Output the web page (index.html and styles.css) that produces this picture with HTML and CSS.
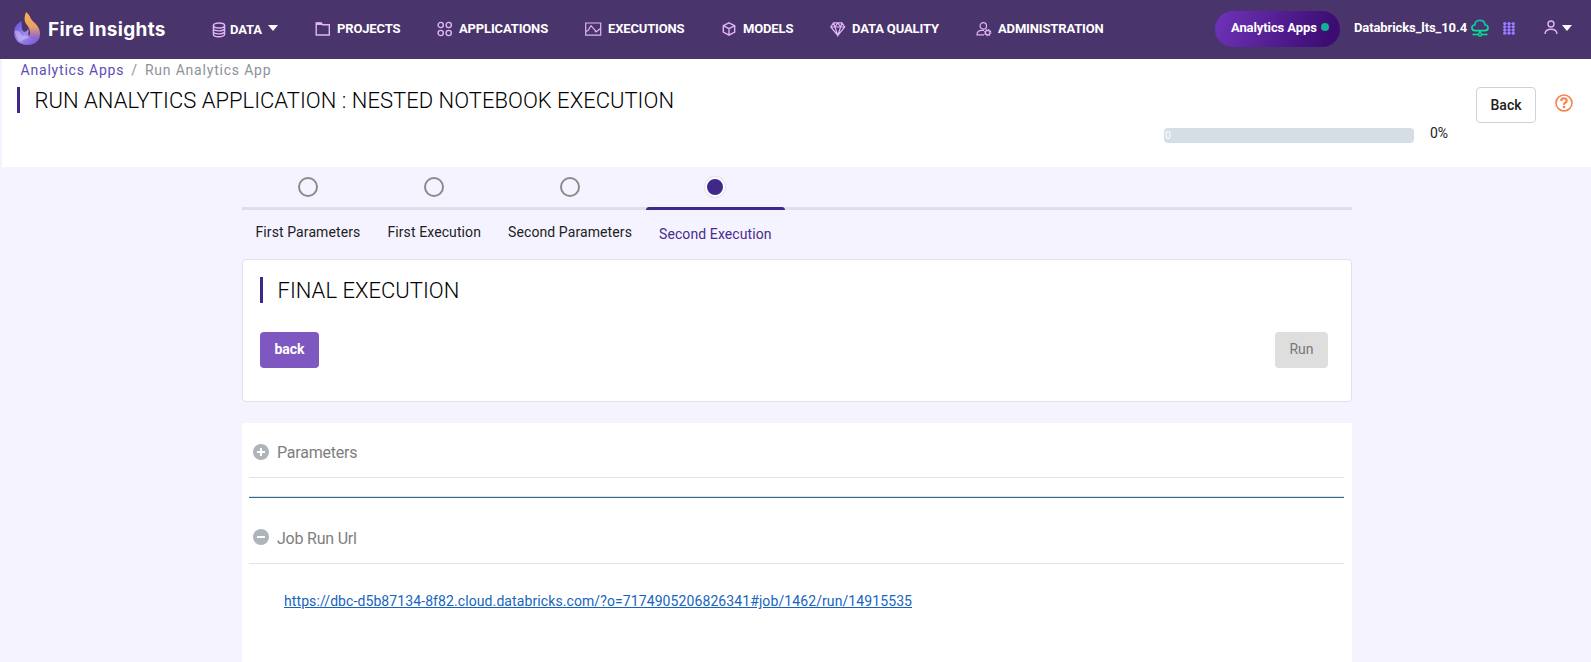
FILE: index.html
```html
<!DOCTYPE html>
<html lang="en">
<head>
<meta charset="utf-8">
<title>Fire Insights</title>
<link rel="stylesheet" href="styles.css">
</head>
<body>
<header class="topbar">
  <a class="brand">
    <svg class="brand-logo" width="28" height="35" viewBox="0 0 28 35">
      <defs>
        <linearGradient id="flame" x1="0" y1="0" x2="0" y2="1"><stop offset="0" stop-color="#ffb547"/><stop offset=".45" stop-color="#e5a268"/><stop offset=".8" stop-color="#8a62d8"/><stop offset="1" stop-color="#6a45cf"/></linearGradient>
        <linearGradient id="swirl" x1="0" y1="0" x2="1" y2="1"><stop offset="0" stop-color="#5b46dc"/><stop offset=".5" stop-color="#a08be8"/><stop offset="1" stop-color="#6c4dd4"/></linearGradient>
      </defs>
      <path d="M13 1C16 3 17 6 18 8C21 12 27 15 27 22.500C27 29 22 34 15 34C13 34 11 30 14 27C19 24 17 18 14 14C10 9 12 5 13 1Z" fill="url(#flame)"/>
      <path d="M8.500 10C3 13 1 17 1 22C1 29 7 34 14 34C20 34 25 31 27 26C23 29 18 27 16 25C14 22 17 21 15 18C14 20 12 22 10 20C8 17 9 14 8.500 10Z" fill="url(#swirl)"/>
      <path d="M2 20C6 19 8 22 9 25C12 24 15 25 16 26C14 28 10 28 8 31C5 29 2 24 2 20Z" fill="#c4b5f5" opacity=".65"/>
    </svg>
    <span class="brand-name">Fire Insights</span>
  </a>
  <nav class="nav">
    <a class="nav-item nav-data"><svg width="14" height="16" viewBox="0 0 14 16"><g class="line"><ellipse cx="7" cy="3.500" rx="5.600" ry="2.500"/><path d="M1.400 3.500V12.200C1.400 15.600 12.600 15.600 12.600 12.200V3.500M1.400 6.500C1.400 9.600 12.600 9.600 12.600 6.500M1.400 9.500C1.400 12.600 12.600 12.600 12.600 9.500"/></g></svg><span>DATA</span><i class="caret"></i></a>
    <a class="nav-item"><svg width="16" height="16" viewBox="0 0 16 16"><path class="line" d="M1.200 14V2H6.200L7.500 3.700H14.300V14Z"/><path d="M1 1.500H6.500L8 4H1Z" fill="#e0b4f6"/></svg><span>PROJECTS</span></a>
    <a class="nav-item"><svg width="16" height="16" viewBox="0 0 16 16"><g class="line"><circle cx="3.700" cy="4" r="2.600"/><circle cx="11.700" cy="4" r="2.600"/><circle cx="3.700" cy="12" r="2.600"/><circle cx="11.700" cy="12" r="2.600"/></g></svg><span>APPLICATIONS</span></a>
    <a class="nav-item"><svg width="17" height="16" viewBox="0 0 17 16"><path class="line thin" d="M.7 2H15.700V14.200H.7ZM1 10.500L3 9.500L6 4.700L11.300 10.700L15.500 7.500M9.800 10.700H12"/></svg><span>EXECUTIONS</span></a>
    <a class="nav-item"><svg width="15" height="16" viewBox="0 0 15 16"><path class="line" d="M7 1.800L12.700 4.700V11L7 14.200L1.300 11V4.700ZM1.300 4.700L7 7.700L12.700 4.700M7 7.700V14.200"/></svg><span>MODELS</span></a>
    <a class="nav-item"><svg width="16" height="16" viewBox="0 0 16 16"><path class="line thin" d="M3.500 1.900H12L14.700 6L7.800 14.500L.8 6ZM.8 6H14.700M3.500 1.900L5 6L7.800 14.500L10.600 6L12 1.900M5 6L7.800 2L10.600 6"/></svg><span>DATA QUALITY</span></a>
    <a class="nav-item"><svg width="16" height="16" viewBox="0 0 16 16"><g class="line thin"><circle cx="7.300" cy="4.900" r="3.200"/><path d="M8 13.900H1C.8 11 3 9.400 5.500 9.400H8"/><circle cx="11.700" cy="11.600" r="2.300"/><circle cx="11.700" cy="11.600" r="3.100" stroke-dasharray="1.200 1.230"/></g></svg><span>ADMINISTRATION</span></a>
  </nav>
  <div class="tools">
    <a class="pill">Analytics Apps<i class="dot"></i></a>
    <span class="cluster">Databricks_lts_10.4</span>
    <svg class="cloud" width="18" height="18" viewBox="0 0 18 18"><defs><linearGradient id="cg" x1="0" y1="0" x2="0" y2="1"><stop offset="0" stop-color="#0ebaa8"/><stop offset="1" stop-color="#00ee91"/></linearGradient></defs><path d="M4.200 11.700C-.1 11.500-.1 6.200 3.800 6C4-.2 13.500-.3 14.100 6C18.100 6.200 18 11.500 13.700 11.700ZM9 12V14" fill="none" stroke="url(#cg)" stroke-width="1.700"/><path d="M1.500 15.500H7.200M10.800 15.500H16.500" stroke="#00eb8f" stroke-width="1.500"/><circle cx="9" cy="15.500" r="1.600" fill="none" stroke="#00eb8f" stroke-width="1.300"/></svg>
    <svg class="grid-icon" width="12" height="13" viewBox="0 0 12 13"><g stroke="#7755d2" stroke-width=".9"><path d="M1.700 1V12M6 1V12M10.300 1V12M1 1.600H11M1 4.800H11M1 8H11M1 11.200H11"/></g><g fill="#987cff"><circle cx="1.700" cy="1.600" r="1.600"/><circle cx="6" cy="1.600" r="1.600"/><circle cx="10.300" cy="1.600" r="1.600"/><circle cx="1.700" cy="4.800" r="1.600"/><circle cx="6" cy="4.800" r="1.600"/><circle cx="10.300" cy="4.800" r="1.600"/><circle cx="1.700" cy="8" r="1.600"/><circle cx="6" cy="8" r="1.600"/><circle cx="10.300" cy="8" r="1.600"/><circle cx="1.700" cy="11.200" r="1.600"/><circle cx="6" cy="11.200" r="1.600"/><circle cx="10.300" cy="11.200" r="1.600"/></g></svg>
    <svg class="user" width="14" height="15" viewBox="0 0 14 15"><g class="line"><circle cx="7" cy="4" r="3"/><path d="M1 14C1.500 7.700 12.500 7.700 13 14"/></g></svg>
    <i class="caret"></i>
  </div>
</header>

<section class="page-head">
  <div class="head-left">
    <div class="crumbs"><a>Analytics Apps</a><span class="sep">/</span><span>Run Analytics App</span></div>
    <h1 class="title">RUN ANALYTICS APPLICATION : NESTED NOTEBOOK EXECUTION</h1>
  </div>
  <div class="progress"><span>0</span></div>
  <div class="percent">0%</div>
  <button class="btn btn-outline">Back</button>
  <svg class="help" width="18" height="18" viewBox="0 0 18 18"><circle cx="9" cy="9" r="8" fill="none" stroke="#f5834a" stroke-width="1.600"/><path d="M6.200 6.900C6.300 3.300 11.800 3.500 11.700 6.700C11.700 8.500 9 8.700 9 10.800" fill="none" stroke="#f5834a" stroke-width="2.200"/><circle cx="9" cy="13" r="1.300" fill="#f5834a"/></svg>
</section>

<main class="content">
  <ol class="steps">
    <li class="step"><i class="mark"></i><span>First Parameters</span></li>
    <li class="step"><i class="mark"></i><span>First Execution</span></li>
    <li class="step"><i class="mark"></i><span>Second Parameters</span></li>
    <li class="step active"><i class="mark"></i><span>Second Execution</span></li>
    <li class="rest"></li>
  </ol>
  <section class="card">
    <h2 class="title">FINAL EXECUTION</h2>
    <div class="actions"><button class="btn btn-primary">back</button><button class="btn btn-muted">Run</button></div>
  </section>
  <section class="results">
    <div class="fold"><svg width="16" height="16" viewBox="0 0 16 16"><circle cx="8" cy="8" r="8" fill="#adb5ba"/><path d="M4 8H12M8 4V12" stroke="#fff" stroke-width="2"/></svg><span>Parameters</span></div>
    <div class="divider"></div>
    <div class="fold fold-url"><svg width="16" height="16" viewBox="0 0 16 16"><circle cx="8" cy="8" r="8" fill="#adb5ba"/><path d="M4 8H12" stroke="#fff" stroke-width="2"/></svg><span>Job Run Url</span></div>
    <a class="url">https://dbc-d5b87134-8f82.cloud.databricks.com/?o=7174905206826341#job/1462/run/14915535</a>
  </section>
</main>
</body>
</html>
```
FILE: styles.css
```css
* { box-sizing: border-box; }
body { margin: 0; height: 662px; overflow: hidden; display: flex; flex-direction: column; background: #f5f3ff; color: #212121; font: 14px/20px Roboto, sans-serif; }
svg { display: block; flex: none; }
.line { fill: none; stroke: #e0b4f6; stroke-width: 1.4; }
.thin { stroke-width: 1.2; }
.caret { border: 5px solid transparent; border-top: 6px solid #fff; border-bottom: 0; }

.topbar { height: 59px; flex: none; display: flex; align-items: flex-start; background: #4a346c; color: #fff; }
.brand { display: flex; width: 212px; padding: 11px 0 0 13px; }
.brand-name { margin: 5px 0 0 7px; font: 700 19px/28px Inter, sans-serif; letter-spacing: .32px; white-space: nowrap; }
.nav { display: grid; grid-template-columns: 103px 122px 148px 137px 108px 146px 150px; padding-top: 18px; }
.nav-item { display: flex; align-items: center; height: 21px; gap: 6px; font-weight: 700; font-size: 13px; letter-spacing: -.15px; white-space: nowrap; }
.nav-data { gap: 4px; padding-top: 3px; }
.nav-data .caret { margin: -5px 0 0 2px; }
.tools { display: flex; align-items: flex-start; margin-left: auto; padding: 11px 19px 0 0; font-weight: 700; font-size: 13px; white-space: nowrap; }
.pill { display: flex; width: 125px; height: 36px; padding: 7px 0 0 16px; border-radius: 18px; background: linear-gradient(110deg, #6d31b5 5%, #3c0c72 90%); letter-spacing: -.1px; }
.dot { width: 8px; height: 8px; margin: 5px 0 0 4px; border-radius: 50%; background: #14b195; }
.cluster { width: 117px; margin: 7px 0 0 14px; letter-spacing: -.1px; }
.cloud { margin: 8px 0 0 0; }
.grid-icon { margin: 11px 0 0 14px; }
.user { margin: 9px 0 0 29px; }
.tools > .caret { margin: 14px 0 0 4px; }

.page-head { display: flex; flex: none; height: 108px; margin-left: 2px; background: #fff; }
.head-left { width: 1162px; padding-left: 15px; }
.crumbs { display: flex; gap: 7px; padding: 1px 0 0 3.500px; letter-spacing: .8px; color: #8d9299; }
.crumbs a { color: #5e4db2; }
.title { margin: 0; border-left: 3px solid #3f2887; padding: 1px 0 0 14.500px; height: 26px; font-weight: 300; font-size: 22px; line-height: 26px; color: #000; letter-spacing: .02px; white-space: nowrap; }
.crumbs + .title { margin-top: 7px; }
.progress { width: 250px; height: 15px; margin-top: 69px; border-radius: 4px; background: #d6dee5; color: #fff; font-size: 10.500px; line-height: 15px; padding-left: 1px; }
.percent { width: 46px; margin: 64px 0 0 16px; }
.btn { height: 36px; padding: 0; border: 0; border-radius: 4px; font: 500 14px/20px Roboto, sans-serif; }
.btn-outline { width: 60px; margin-top: 28px; border: 1px solid #cfd2da; background: #fff; color: #212121; }
.help { margin: 35px 0 0 19px; }

.content { width: 1110px; margin-left: 242px; flex: 1; display: flex; flex-direction: column; }
.steps { display: flex; margin: 0; padding: 0; list-style: none; height: 92px; flex: none; }
.step { position: relative; padding: 10px 13.500px 0; display: flex; flex-direction: column; align-items: center; white-space: nowrap; letter-spacing: .1px; }
.step::after { content: ""; position: absolute; left: 0; right: 0; top: 40px; height: 3px; background: #dee0e8; }
.mark { width: 20px; height: 20px; border: 2px solid #8b8b8b; border-radius: 50%; }
.step span { margin-top: 25px; }
.active { color: #4a2b8c; }
.active span { margin-top: 27px; }
.active::after { background: #3f2887; border-radius: 3px 3px 0 0; }
.active .mark { background: #3f2887; border-color: #fff; box-shadow: 0 0 1px 1px #e4e0ec; }
.rest { flex: 1; height: 3px; margin-top: 40px; background: #dee0e8; }
.card { height: 143px; flex: none; padding: 17px 23px 0 17px; border: 1px solid #e1e1e6; border-radius: 4px; background: #fff; }
.actions { display: flex; justify-content: space-between; margin-top: 29px; }
.btn-primary { width: 59px; padding-bottom: 2px; background: #7e57c0; color: #fff; font-weight: 700; }
.btn-muted { width: 53px; padding-bottom: 2px; background: #dedede; color: #777; font-weight: 400; }
.results { flex: 1; margin-top: 21px; padding: 0 8px 0 7px; background: #fff; }
.fold { display: flex; gap: 8px; height: 55px; padding: 21px 0 0 4px; border-bottom: 1px solid #e1e2e3; color: #7e7e7e; font-size: 16px; letter-spacing: -.22px; }
.fold span { margin-top: -1px; }
.divider { height: 2px; margin-top: 18px; border-top: 1px solid #dce2e6; background: #326a8f; }
.fold-url { height: 66px; padding-top: 31px; }
.fold-url span { margin-top: 0; }
.url { display: inline-block; margin: 27px 0 0 35px; color: #1565c0; letter-spacing: .095px; text-decoration: underline; }
```
